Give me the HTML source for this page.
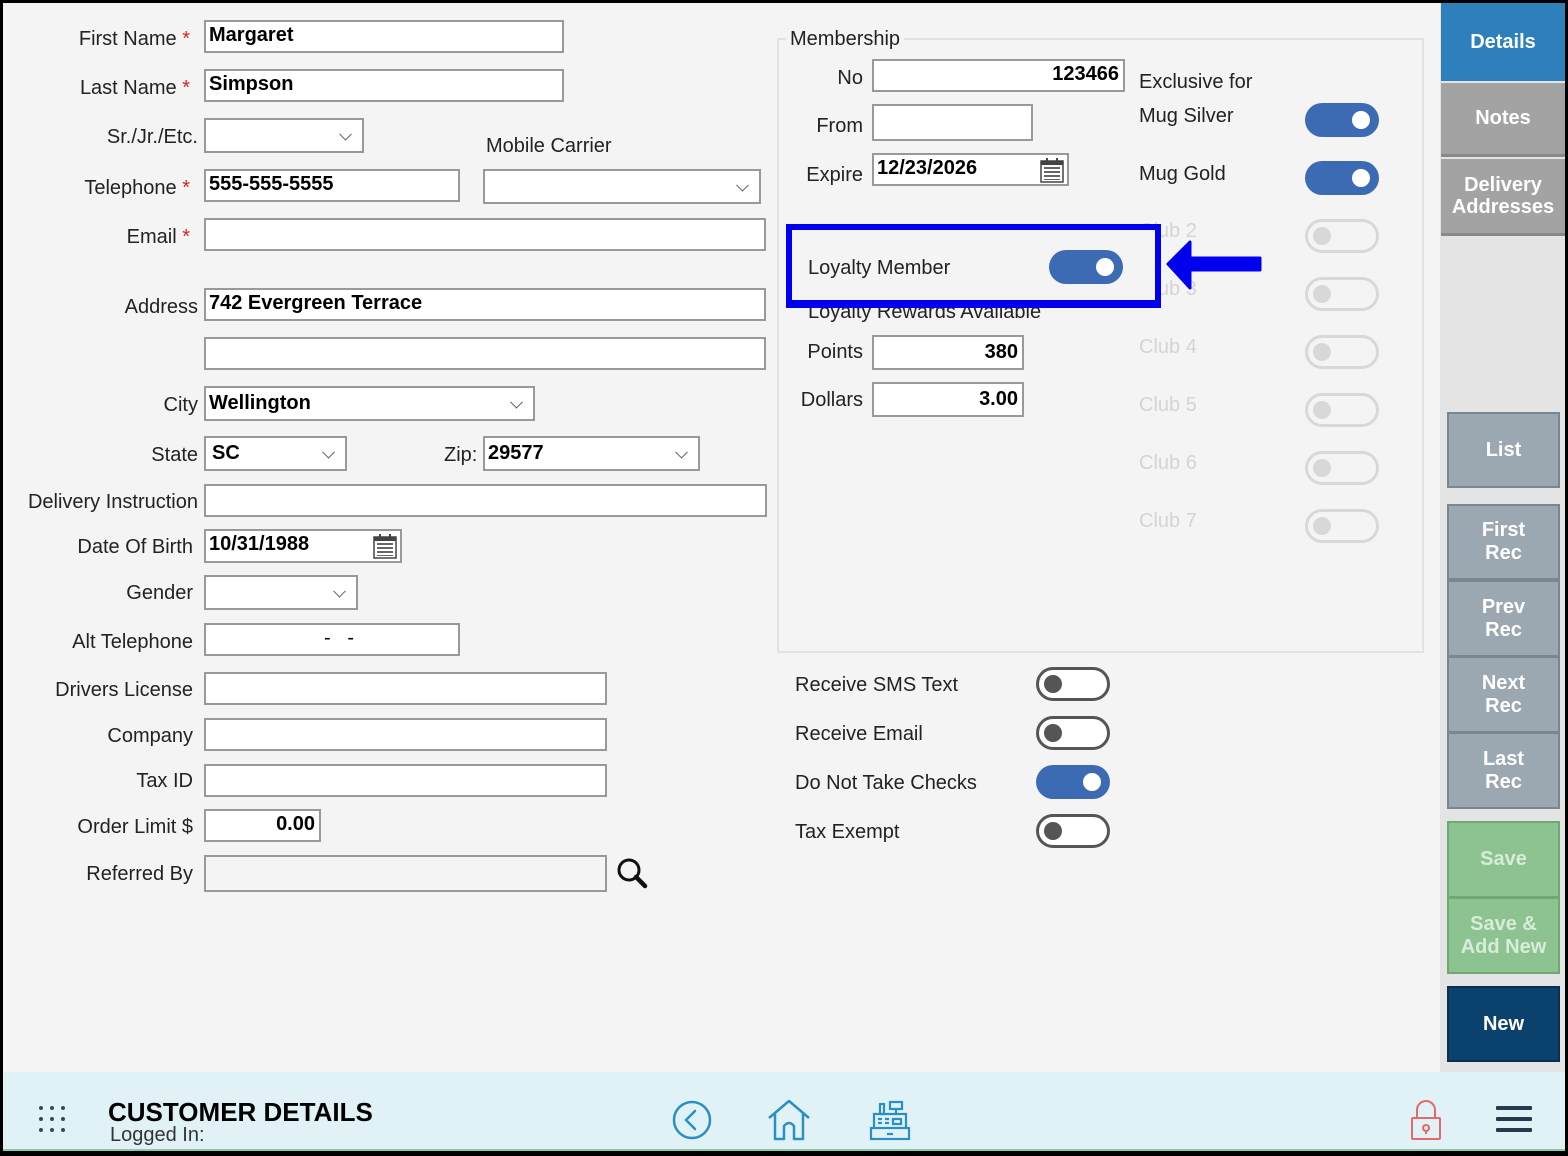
<!DOCTYPE html>
<html><head><meta charset="utf-8"><style>
*{box-sizing:border-box;margin:0;padding:0}
body{width:1568px;height:1156px;background:#000;position:relative;overflow:hidden;font-family:"Liberation Sans",sans-serif;color:#222}
.main{position:absolute;left:3px;top:3px;width:1437px;height:1069px;background:#f4f4f4}
.side{position:absolute;left:1440px;top:3px;width:125px;height:1069px;background:#e4e4e4}
.a{position:absolute}
.lbl{position:absolute;font-size:20px;text-align:right;white-space:nowrap;line-height:24px}
.lbl b{color:#e02020;font-weight:normal}
.in{position:absolute;background:#fff;border:2px solid #999;font-size:20px;font-weight:bold;color:#000;padding-left:3px;line-height:26px;white-space:nowrap}
.r{text-align:right;padding-right:4px}
.sel::after{content:"";position:absolute;right:12px;top:50%;width:8px;height:8px;border-right:1.5px solid #666;border-bottom:1.5px solid #666;transform:translateY(-70%) rotate(45deg)}
.tg{position:absolute;width:74px;height:34px;border-radius:17px}
.on{background:#3d6bb3}
.on::after{content:"";position:absolute;right:9px;top:8px;width:18px;height:18px;border-radius:50%;background:#fff}
.off{border:3px solid #555;background:#fff}
.off::after{content:"";position:absolute;left:5px;top:5px;width:18px;height:18px;border-radius:50%;background:#555}
.dis{border:3px solid #d8d8d8;background:#f4f4f4}
.dis::after{content:"";position:absolute;left:5px;top:5px;width:18px;height:18px;border-radius:50%;background:#d8d8d8}
.club{position:absolute;left:1139px;font-size:20px;color:#d4d4d4}
.btn{position:absolute;left:1447px;width:113px;color:#fff;font-weight:bold;font-size:20px;text-align:center;display:flex;align-items:center;justify-content:center;line-height:23px;border:2px solid #7a8790}
.g{background:#9ba8b1}
.gr{background:#8cc390;color:#d8ecd8;border-color:#6fa873}
.cal{position:absolute;right:2px;top:2px;width:26px;height:26px}
</style></head><body>
<div class="main"></div>
<div class="side"></div>

<!-- left labels -->
<div class="lbl" style="right:1378px;top:27px">First Name <b>*</b></div>
<div class="lbl" style="right:1378px;top:76px">Last Name <b>*</b></div>
<div class="lbl" style="right:1370px;top:125px">Sr./Jr./Etc.</div>
<div class="lbl" style="right:1378px;top:176px">Telephone <b>*</b></div>
<div class="lbl" style="right:1378px;top:225px">Email <b>*</b></div>
<div class="lbl" style="right:1370px;top:295px">Address</div>
<div class="lbl" style="right:1370px;top:393px">City</div>
<div class="lbl" style="right:1370px;top:443px">State</div>
<div class="lbl" style="right:1370px;top:490px">Delivery Instruction</div>
<div class="lbl" style="right:1375px;top:535px">Date Of Birth</div>
<div class="lbl" style="right:1375px;top:581px">Gender</div>
<div class="lbl" style="right:1375px;top:630px">Alt Telephone</div>
<div class="lbl" style="right:1375px;top:678px">Drivers License</div>
<div class="lbl" style="right:1375px;top:724px">Company</div>
<div class="lbl" style="right:1375px;top:769px">Tax ID</div>
<div class="lbl" style="right:1375px;top:815px">Order Limit $</div>
<div class="lbl" style="right:1375px;top:862px">Referred By</div>
<div class="lbl" style="left:486px;top:134px">Mobile Carrier</div>
<div class="lbl" style="left:444px;top:443px">Zip:</div>

<div class="in" style="left:204px;top:20px;width:360px;height:33px">Margaret</div>
<div class="in" style="left:204px;top:69px;width:360px;height:33px">Simpson</div>
<div class="in sel" style="left:204px;top:118px;width:160px;height:35px"></div>
<div class="in" style="left:204px;top:169px;width:256px;height:33px">555-555-5555</div>
<div class="in sel" style="left:483px;top:169px;width:278px;height:35px"></div>
<div class="in" style="left:204px;top:218px;width:562px;height:33px"></div>
<div class="in" style="left:204px;top:288px;width:562px;height:33px">742 Evergreen Terrace</div>
<div class="in" style="left:204px;top:337px;width:562px;height:33px"></div>
<div class="in sel" style="left:204px;top:386px;width:331px;height:35px;line-height:30px">Wellington</div>
<div class="in sel" style="left:204px;top:436px;width:143px;height:35px;line-height:30px;padding-left:6px">SC</div>
<div class="in sel" style="left:483px;top:436px;width:217px;height:35px;line-height:30px">29577</div>
<div class="in" style="left:204px;top:484px;width:563px;height:33px"></div>
<div class="in" style="left:204px;top:529px;width:198px;height:34px">10/31/1988
<svg class="cal" viewBox="0 0 26 26"><rect x="2" y="4" width="22" height="21" fill="#fff" stroke="#444" stroke-width="1.5"/><rect x="2" y="4" width="22" height="4" fill="#444"/><g fill="#666"><rect x="5" y="10" width="16" height="2"/><rect x="5" y="14" width="16" height="2"/><rect x="5" y="18" width="16" height="2"/><rect x="5" y="22" width="16" height="1"/></g><rect x="7" y="1" width="2" height="5" fill="#444"/><rect x="17" y="1" width="2" height="5" fill="#444"/></svg></div>
<div class="in sel" style="left:204px;top:575px;width:154px;height:35px"></div>
<div class="in" style="left:204px;top:623px;width:256px;height:33px;font-weight:normal;padding-left:118px">-&nbsp;&nbsp;&nbsp;-</div>
<div class="in" style="left:204px;top:672px;width:403px;height:33px"></div>
<div class="in" style="left:204px;top:718px;width:403px;height:33px"></div>
<div class="in" style="left:204px;top:764px;width:403px;height:33px"></div>
<div class="in r" style="left:204px;top:809px;width:117px;height:33px">0.00</div>
<div class="in" style="left:204px;top:855px;width:403px;height:37px;background:#f4f4f4"></div>
<svg class="a" style="left:614px;top:856px" width="36" height="36" viewBox="0 0 36 36"><circle cx="15" cy="14" r="10" fill="none" stroke="#111" stroke-width="3"/><path d="M22 21 L31 30" stroke="#111" stroke-width="4.5" stroke-linecap="round"/></svg>

<!-- membership -->
<div class="a" style="left:777px;top:38px;width:647px;height:615px;border:2px solid #e2e2e2"></div>
<div class="lbl" style="left:786px;top:27px;background:#f4f4f4;padding:0 4px">Membership</div>
<div class="lbl" style="right:705px;top:66px">No</div>
<div class="lbl" style="right:705px;top:114px">From</div>
<div class="lbl" style="right:705px;top:163px">Expire</div>
<div class="in r" style="left:872px;top:59px;width:253px;height:33px">123466</div>
<div class="in" style="left:872px;top:104px;width:161px;height:37px"></div>
<div class="in" style="left:872px;top:153px;width:197px;height:33px">12/23/2026
<svg class="cal" viewBox="0 0 26 26"><rect x="2" y="4" width="22" height="21" fill="#fff" stroke="#444" stroke-width="1.5"/><rect x="2" y="4" width="22" height="4" fill="#444"/><g fill="#666"><rect x="5" y="10" width="16" height="2"/><rect x="5" y="14" width="16" height="2"/><rect x="5" y="18" width="16" height="2"/><rect x="5" y="22" width="16" height="1"/></g><rect x="7" y="1" width="2" height="5" fill="#444"/><rect x="17" y="1" width="2" height="5" fill="#444"/></svg></div>
<div class="lbl" style="left:1139px;top:70px">Exclusive for</div>
<div class="lbl" style="left:1139px;top:104px">Mug Silver</div>
<div class="lbl" style="left:1139px;top:162px">Mug Gold</div>
<div class="tg on" style="left:1305px;top:103px"></div>
<div class="tg on" style="left:1305px;top:161px"></div>
<div class="club" style="top:220px">Club 2</div>
<div class="club" style="top:278px">Club 3</div>
<div class="club" style="top:336px">Club 4</div>
<div class="club" style="top:394px">Club 5</div>
<div class="club" style="top:452px">Club 6</div>
<div class="club" style="top:510px">Club 7</div>
<div class="tg dis" style="left:1305px;top:219px"></div>
<div class="tg dis" style="left:1305px;top:277px"></div>
<div class="tg dis" style="left:1305px;top:335px"></div>
<div class="tg dis" style="left:1305px;top:393px"></div>
<div class="tg dis" style="left:1305px;top:451px"></div>
<div class="tg dis" style="left:1305px;top:509px"></div>

<div class="lbl" style="left:808px;top:300px">Loyalty Rewards Available</div>
<div class="a" style="left:786px;top:224px;width:375px;height:84px;border:6px solid #0000ee;background:#f4f4f4;border-bottom-width:6px"></div>
<div class="a" style="left:786px;top:300px;width:375px;height:8px;background:#0000ee"></div>
<div class="lbl" style="left:808px;top:256px">Loyalty Member</div>
<div class="tg on" style="left:1049px;top:250px"></div>
<svg class="a" style="left:1166px;top:238px" width="96" height="54" viewBox="0 0 96 54"><path d="M2 26 L24 4 L24 20 L94 20 L94 32 L24 32 L24 50 Z" fill="#0000ee" stroke="#0000ee" stroke-width="3" stroke-linejoin="round"/></svg>

<div class="lbl" style="right:705px;top:340px">Points</div>
<div class="lbl" style="right:705px;top:388px">Dollars</div>
<div class="in r" style="left:872px;top:335px;width:152px;height:35px;line-height:30px">380</div>
<div class="in r" style="left:872px;top:382px;width:152px;height:35px;line-height:30px">3.00</div>

<div class="lbl" style="left:795px;top:673px">Receive SMS Text</div>
<div class="lbl" style="left:795px;top:722px">Receive Email</div>
<div class="lbl" style="left:795px;top:771px">Do Not Take Checks</div>
<div class="lbl" style="left:795px;top:820px">Tax Exempt</div>
<div class="tg off" style="left:1036px;top:667px"></div>
<div class="tg off" style="left:1036px;top:716px"></div>
<div class="tg on" style="left:1036px;top:765px"></div>
<div class="tg off" style="left:1036px;top:814px"></div>

<!-- side tabs -->
<div class="a" style="left:1441px;top:3px;width:124px;height:78px;background:#2e80bd;color:#fff;font-weight:bold;font-size:20px;display:flex;align-items:center;justify-content:center">Details</div>
<div class="a" style="left:1441px;top:83px;width:124px;height:74px;background:#a3a3a3;color:#fff;font-weight:bold;font-size:20px;display:flex;align-items:center;justify-content:center;border-bottom:3px solid #888">Notes</div>
<div class="a" style="left:1441px;top:159px;width:124px;height:77px;background:#a3a3a3;color:#fff;font-weight:bold;font-size:20px;display:flex;align-items:center;justify-content:center;text-align:center;line-height:22px;border-bottom:3px solid #888">Delivery<br>Addresses</div>

<div class="btn g" style="top:412px;height:76px">List</div>
<div class="btn g" style="top:504px;height:76px">First<br>Rec</div>
<div class="btn g" style="top:580px;height:77px">Prev<br>Rec</div>
<div class="btn g" style="top:656px;height:77px">Next<br>Rec</div>
<div class="btn g" style="top:732px;height:77px">Last<br>Rec</div>
<div class="btn gr" style="top:821px;height:77px">Save</div>
<div class="btn gr" style="top:897px;height:77px">Save &amp;<br>Add New</div>
<div class="btn" style="top:986px;height:76px;background:#0b416d;border-color:#0a3050">New</div>

<!-- bottom bar -->
<div class="a" style="left:3px;top:1072px;width:1562px;height:79px;background:#e1f2f7;border-bottom:2px solid #8cc8b0"></div>
<svg class="a" style="left:36px;top:1104px" width="32" height="32" viewBox="0 0 32 32" fill="#3a4a55"><circle cx="5" cy="4" r="2"/><circle cx="16" cy="4" r="2"/><circle cx="27" cy="4" r="2"/><circle cx="5" cy="15" r="2"/><circle cx="16" cy="15" r="2"/><circle cx="27" cy="15" r="2"/><circle cx="5" cy="26" r="2"/><circle cx="16" cy="26" r="2"/><circle cx="27" cy="26" r="2"/></svg>
<div class="a" style="left:108px;top:1097px;font-size:26px;font-weight:bold;color:#000">CUSTOMER DETAILS</div>
<div class="a" style="left:110px;top:1124px;font-size:20px;color:#333">Logged In:</div>
<svg class="a" style="left:670px;top:1098px" width="44" height="44" viewBox="0 0 44 44" fill="none" stroke="#2a8fc2" stroke-width="2.5"><circle cx="22" cy="22" r="18"/><path d="M25 13 L16 22 L25 31" stroke-linecap="round"/></svg>
<svg class="a" style="left:766px;top:1098px" width="46" height="44" viewBox="0 0 46 44" fill="none" stroke="#2a8fc2" stroke-width="2.5" stroke-linejoin="round"><path d="M3 20 L23 3 L43 20"/><path d="M9 15 V41 H18 V28 Q23 22 28 28 V41 H37 V15"/></svg>
<svg class="a" style="left:868px;top:1098px" width="44" height="44" viewBox="0 0 44 44" fill="none" stroke="#2a8fc2" stroke-width="2.2"><rect x="3" y="30" width="38" height="11"/><path d="M6 30 V16 H38 V30"/><rect x="22" y="4" width="12" height="7"/><path d="M28 11 V16"/><rect x="12" y="6" width="4" height="10"/><path d="M10 21h4M17 21h4M10 25h4M17 25h4M25 21h8v5h-8z M19 36h6"/></svg>
<svg class="a" style="left:1409px;top:1098px" width="34" height="44" viewBox="0 0 34 44" fill="none" stroke="#e36a6a" stroke-width="2"><path d="M8 20 V12 A9 9 0 0 1 26 12 V20"/><rect x="3" y="20" width="28" height="21" rx="1"/><path d="M17 27 a3 3 0 1 0 0.1 0 M17 32 V36"/></svg>
<svg class="a" style="left:1494px;top:1104px" width="40" height="32" viewBox="0 0 40 32" fill="#253b4d"><rect x="2" y="2" width="36" height="4" rx="1"/><rect x="2" y="13" width="36" height="4" rx="1"/><rect x="2" y="24" width="36" height="4" rx="1"/></svg>
</body></html>
